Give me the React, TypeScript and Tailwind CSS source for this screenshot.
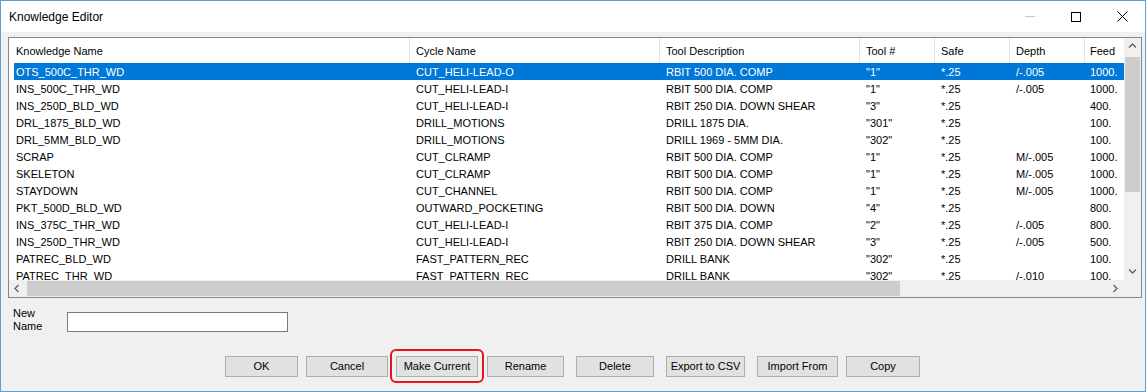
const rows: string[][] = [
  ["OTS_500C_THR_WD", "CUT_HELI-LEAD-O", "RBIT 500 DIA. COMP", '"1"', "*.25", "/-.005", "1000."],
  ["INS_500C_THR_WD", "CUT_HELI-LEAD-I", "RBIT 500 DIA. COMP", '"1"', "*.25", "/-.005", "1000."],
  ["INS_250D_BLD_WD", "CUT_HELI-LEAD-I", "RBIT 250 DIA. DOWN SHEAR", '"3"', "*.25", "", "400."],
  ["DRL_1875_BLD_WD", "DRILL_MOTIONS", "DRILL 1875 DIA.", '"301"', "*.25", "", "100."],
  ["DRL_5MM_BLD_WD", "DRILL_MOTIONS", "DRILL 1969 - 5MM DIA.", '"302"', "*.25", "", "100."],
  ["SCRAP", "CUT_CLRAMP", "RBIT 500 DIA. COMP", '"1"', "*.25", "M/-.005", "1000."],
  ["SKELETON", "CUT_CLRAMP", "RBIT 500 DIA. COMP", '"1"', "*.25", "M/-.005", "1000."],
  ["STAYDOWN", "CUT_CHANNEL", "RBIT 500 DIA. COMP", '"1"', "*.25", "M/-.005", "1000."],
  ["PKT_500D_BLD_WD", "OUTWARD_POCKETING", "RBIT 500 DIA. DOWN", '"4"', "*.25", "", "800."],
  ["INS_375C_THR_WD", "CUT_HELI-LEAD-I", "RBIT 375 DIA. COMP", '"2"', "*.25", "/-.005", "800."],
  ["INS_250D_THR_WD", "CUT_HELI-LEAD-I", "RBIT 250 DIA. DOWN SHEAR", '"3"', "*.25", "/-.005", "500."],
  ["PATREC_BLD_WD", "FAST_PATTERN_REC", "DRILL BANK", '"302"', "*.25", "", "100."],
  ["PATREC_THR_WD", "FAST_PATTERN_REC", "DRILL BANK", '"302"', "*.25", "/-.010", "100."],
];

const headers = ["Knowledge Name", "Cycle Name", "Tool Description", "Tool #", "Safe", "Depth", "Feed"];

// header cells include the 1px divider on the right
const headerCls = [
  "w-[401px] pl-[7px] border-r border-[#e5e5e5]",
  "w-[250px] pl-[6px] border-r border-[#e5e5e5]",
  "w-[200px] pl-[6px] border-r border-[#e5e5e5]",
  "w-[75px] pl-[6px] border-r border-[#e5e5e5]",
  "w-[75px] pl-[6px] border-r border-[#e5e5e5]",
  "w-[75px] pl-[6px] border-r border-[#e5e5e5]",
  "flex-1 pl-[5px]",
];

const cellCls = [
  "w-[396px] pl-[2px]",
  "w-[250px] pl-[6px]",
  "w-[200px] pl-[6px]",
  "w-[75px] pl-[6px]",
  "w-[75px] pl-[6px]",
  "w-[75px] pl-[6px]",
  "flex-1 pl-[5px]",
];

const buttons = [
  { label: "OK", cls: "w-[73px] ml-[217px]" },
  { label: "Cancel", cls: "w-[82px] ml-[8px]" },
  { label: "Make Current", cls: "w-[82px] ml-[8px]", marked: true },
  { label: "Rename", cls: "w-[77px] ml-[9px]" },
  { label: "Delete", cls: "w-[78px] ml-[12px]" },
  { label: "Export to CSV", cls: "w-[79px] ml-[12px]" },
  { label: "Import From", cls: "w-[81px] ml-[12px]" },
  { label: "Copy", cls: "w-[74px] ml-[8px]" },
];

function Chevron({ dir }: { dir: "up" | "down" | "left" | "right" }) {
  const points = {
    up: "1,5.5 4.5,2 8,5.5",
    down: "1,2.5 4.5,6 8,2.5",
    left: "5.5,1 2,4.5 5.5,8",
    right: "2.5,1 6,4.5 2.5,8",
  }[dir];
  return (
    <svg width="9" height="9" viewBox="0 0 9 9">
      <polyline points={points} fill="none" stroke="#606060" strokeWidth="1.3" />
    </svg>
  );
}

export default function App() {
  return (
    <div className="w-[1146px] h-[392px] flex flex-col border border-[#5b9fd4] bg-[#f0f0f0] font-['Liberation_Sans',Arial,sans-serif] text-black">
      {/* Title bar */}
      <div className="h-[31px] bg-white flex items-center shrink-0">
        <span className="pl-[8px] text-[12px]">Knowledge Editor</span>
        <div className="ml-auto flex h-full">
          <div className="w-[46px] flex items-center justify-center">
            <div className="w-[10px] h-px bg-[#c8c8c8]" />
          </div>
          <div className="w-[46px] flex items-center justify-center">
            <div className="w-[10px] h-[10px] border border-black" />
          </div>
          <div className="w-[46px] flex items-center justify-center">
            <svg width="11" height="11" viewBox="0 0 11 11">
              <path d="M0.5 0.5 L10.5 10.5 M10.5 0.5 L0.5 10.5" stroke="#000" strokeWidth="1" />
            </svg>
          </div>
        </div>
      </div>

      {/* Client area */}
      <div className="flex-1 flex flex-col pt-[5px] pl-[7px]">
        {/* List view */}
        <div className="w-[1134px] h-[261px] border border-[#828790] bg-white flex flex-col text-[11px]">
          <div className="h-[242px] flex">
            <div className="flex-1 overflow-hidden">
              <div className="h-[25px] flex items-center">
                {headers.map((h, i) => (
                  <div key={h} className={`${headerCls[i]} h-full flex items-center pt-px whitespace-nowrap shrink-0`}>
                    {h}
                  </div>
                ))}
              </div>
              {rows.map((r, ri) => (
                <div key={ri} className="flex pl-[5px]">
                  <div className={`flex-1 flex h-[17px] ${ri === 0 ? "bg-[#0078d7] text-white" : ""}`}>
                    {r.map((c, ci) => (
                      <div key={ci} className={`${cellCls[ci]} pt-px leading-[17px] whitespace-nowrap shrink-0`}>
                        {c}
                      </div>
                    ))}
                  </div>
                </div>
              ))}
            </div>
            {/* Vertical scrollbar */}
            <div className="w-[17px] bg-[#f0f0f0] flex flex-col">
              <div className="h-[17px] flex items-center justify-center">
                <Chevron dir="up" />
              </div>
              <div className="mt-[2px] mx-[1px] h-[135px] bg-[#cdcdcd]" />
              <div className="flex-1" />
              <div className="h-[17px] flex items-center justify-center">
                <Chevron dir="down" />
              </div>
            </div>
          </div>
          {/* Horizontal scrollbar */}
          <div className="h-[17px] flex">
            <div className="flex-1 flex bg-[#f0f0f0]">
              <div className="w-[17px] flex items-center justify-center">
                <Chevron dir="left" />
              </div>
              <div className="ml-px my-px w-[873px] bg-[#cdcdcd]" />
              <div className="flex-1" />
              <div className="w-[17px] flex items-center justify-center">
                <Chevron dir="right" />
              </div>
            </div>
            <div className="w-[17px] bg-[#f0f0f0]" />
          </div>
        </div>

        {/* New name row */}
        <div className="flex items-start mt-[9px] ml-[5px] text-[11px]">
          <div className="w-[54px] leading-[13px]">
            New
            <br />
            Name
          </div>
          <div className="mt-[5px] w-[221px] h-[20px] bg-white border border-[#7a7a7a]" />
        </div>

        {/* Buttons */}
        <div className="flex mt-[23px] text-[11px]">
          {buttons.map((b) => (
            <div key={b.label} className={`relative ${b.cls}`}>
              <div className="h-[21px] w-full flex items-center justify-center bg-[#e1e1e1] border border-[#adadad] whitespace-nowrap">
                {b.label}
              </div>
              {b.marked && (
                <div className="absolute -left-[6px] -right-[6px] -top-[7px] -bottom-[6px] border-[2.5px] border-[#e3141c] rounded-[6px]" />
              )}
            </div>
          ))}
        </div>
      </div>
    </div>
  );
}
